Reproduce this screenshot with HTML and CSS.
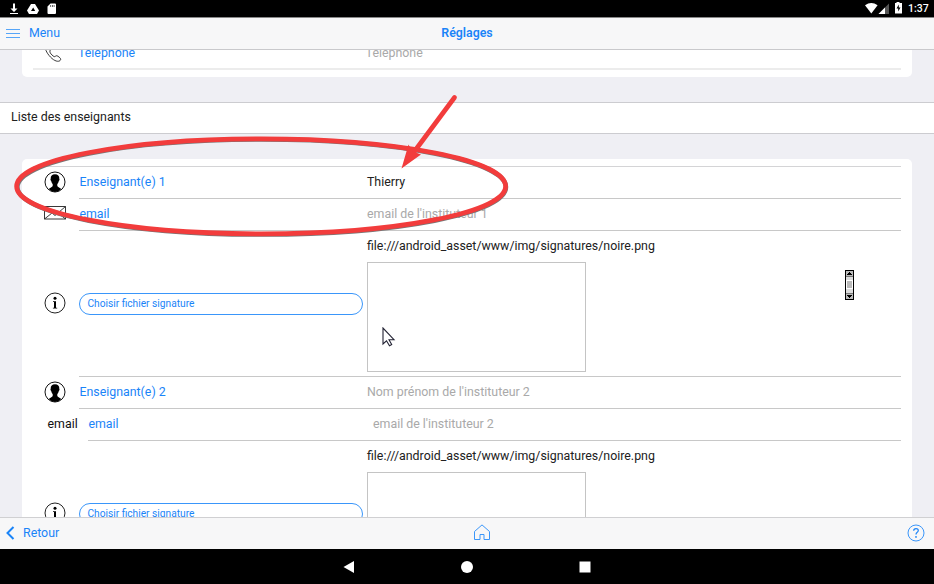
FILE: index.html
```html
<!DOCTYPE html>
<html lang="fr">
<head>
<meta charset="utf-8">
<title>Réglages</title>
<link rel="stylesheet" href="styles.css">
</head>
<body>
<svg class="defs" width="0" height="0">
  <symbol id="person" viewBox="0 0 22 22">
    <circle cx="11" cy="11" r="10" fill="#fff" stroke="#111" stroke-width="1"/>
    <path d="M11 3.200c-2.900 0-4.500 1.700-4.300 4.500-.5.300-.2 1.900.5 2.300.3 1.400.8 2.300 1.500 3v2c-.5 1.200-2.800 1.900-4 2.900A10 10 0 0 0 11 21a10 10 0 0 0 6.300-3.100c-1.200-1-3.500-1.700-4-2.900v-2c.7-.7 1.200-1.600 1.500-3 .7-.4 1-2 .5-2.300.2-2.800-1.400-4.500-4.300-4.500z" fill="#000"/>
  </symbol>
  <symbol id="info" viewBox="0 0 22 22">
    <circle cx="11" cy="11" r="10" fill="none" stroke="#222" stroke-width="1"/>
    <circle cx="11" cy="6.200" r="1.500"/>
    <path d="M9 9.200h3v6.500h1.200v.7H8.900v-.7H10v-5.700H9z"/>
  </symbol>
</svg>
<div class="screen">
  <header class="status">
    <svg class="status-left" width="60" height="17" viewBox="0 0 60 17" fill="#fff">
      <path d="M13 3.500h2v5h2.500L14 12l-3.500-3.500H13zM10 13h8v1h-8z"/>
      <path fill-rule="evenodd" d="M31 4h4l4 6.500-2 3.500h-8l-2-3.500zM33.200 7.500l-2.200 3.500h4.200z"/>
      <path fill-rule="evenodd" d="M50.500 3.500H55q1 0 1 1v8.500q0 1-1 1h-6.500q-1 0-1-1V6.500zM50.300 5.200v1.600h.8V5.200zM52 5.200v1.600h.8V5.200zM53.700 5.200v1.600h.8V5.200z"/>
    </svg>
    <svg class="status-right" width="40" height="17" viewBox="0 0 40 17">
      <path d="M1 5.300Q7.300.8 13.600 5.300L7.300 13.500z" fill="#fff"/>
      <path d="M25 3.500V14H14.500z" fill="#555"/><path d="M21 7.500V14h-6.500z" fill="#fff"/>
      <path d="M32.500 2h3v1H38v10.500h-7V3h1.500z" fill="#fff"/><path d="M34.800 4.500 32.500 8.500h1.700v3l2.300-4h-1.700z" fill="#000"/>
    </svg>
    <span class="clock">1:37</span>
  </header>
  <nav class="topbar">
    <a class="menu"><svg width="14" height="10" viewBox="0 0 14 10"><path d="M0 1.500h14M0 5.500h14M0 9.500h14" stroke="#56a5f8" stroke-width="1"/></svg>Menu</a>
    <h1>Réglages</h1>
  </nav>
  <main class="content">
    <section class="card card-phone">
      <div class="phone-row">
        <div class="icon"><svg width="20" height="22" viewBox="0 0 20 22"><path d="M3 5C1 8 5 14 9 17.500s7.500 3.300 8.500 1.500c.6-1-.2-2-1.500-3s-2.500-1.800-3.500-.8-2 .2-3.500-1.200S6.500 11 7 10s-.5-3-1.500-4.500z" fill="#fff" stroke="#222" stroke-width=".9"/></svg></div>
        <div class="label">Téléphone</div><div class="value hint">Téléphone</div>
      </div>
    </section>
    <h2 class="section-title">Liste des enseignants</h2>
    <section class="card card-list">
      <div class="rows">
      <div class="row">
        <div class="icon"><svg width="22" height="22"><use href="#person"/></svg></div>
        <div class="body"><div class="label">Enseignant(e) 1</div><div class="value">Thierry</div></div>
      </div>
      <div class="row">
        <div class="icon mail"><svg width="22" height="14" viewBox="0 0 22 14"><path d="M.5.500h21v12.500H.5zM.5.500 11 9.500 21.500.500M.5 13l7.500-6M21.500 13 14 7" fill="none" stroke="#222" stroke-width=".9"/></svg></div>
        <div class="body"><div class="label">email</div><div class="value hint">email de l'instituteur 1</div></div>
      </div>
      <div class="row signature">
        <div class="icon"><svg width="22" height="22"><use href="#info"/></svg></div>
        <div class="body"><div class="label"><button>Choisir fichier signature</button></div>
          <div class="value"><div class="path">file:///android_asset/www/img/signatures/noire.png</div><div class="preview"></div></div></div>
      </div>
      <div class="row">
        <div class="icon"><svg width="22" height="22"><use href="#person"/></svg></div>
        <div class="body"><div class="label">Enseignant(e) 2</div><div class="value hint">Nom prénom de l'instituteur 2</div></div>
      </div>
      <div class="row wide-icon">
        <div class="icon">email</div>
        <div class="body"><div class="label">email</div><div class="value hint">email de l'instituteur 2</div></div>
      </div>
      <div class="row signature">
        <div class="icon"><svg width="22" height="22"><use href="#info"/></svg></div>
        <div class="body"><div class="label"><button>Choisir fichier signature</button></div>
          <div class="value"><div class="path">file:///android_asset/www/img/signatures/noire.png</div><div class="preview"></div></div></div>
      </div>
      </div>
    </section>
  </main>
  <footer class="toolbar">
    <a class="back"><svg width="9" height="14" viewBox="0 0 9 14"><path d="M7.500 1 1.500 7l6 6" fill="none" stroke="#1a84f8" stroke-width="2"/></svg>Retour</a>
    <svg class="home" width="18" height="17" viewBox="0 0 18 17"><path d="M1.500 7.500 9 .900l7.500 6.600v8H11v-5H7v5H1.500z" fill="none" stroke="#3a96fa" stroke-width="1"/></svg>
    <svg class="help" width="18" height="18" viewBox="0 0 18 18"><circle cx="9" cy="9" r="8" fill="none" stroke="#3a96fa"/><path d="M6.700 6.800Q6.700 4.600 9 4.600t2.300 2q0 1.100-1.300 1.900-1 .7-1 2.100" fill="none" stroke="#1a84f8" stroke-width="1.200"/><circle cx="9" cy="12.900" r=".9" fill="#1a84f8"/></svg>
  </footer>
  <footer class="android">
    <svg width="12" height="14" viewBox="0 0 12 14"><path d="M.5 7 11 1v12z" fill="#fff"/></svg>
    <svg width="12" height="14" viewBox="0 0 12 14"><circle cx="6" cy="7" r="6" fill="#fff"/></svg>
    <svg width="12" height="14" viewBox="0 0 12 14"><path d="M.5 1.500h11v11H.5z" fill="#fff"/></svg>
  </footer>
  <svg class="annotation" width="934" height="584" viewBox="0 0 934 584">
    <ellipse cx="261.700" cy="187.100" rx="244.300" ry="47.500" fill="none" stroke="#777" stroke-width="4.500"/>
    <ellipse cx="261.100" cy="186.300" rx="244.500" ry="47.500" fill="none" stroke="#f23c3c" stroke-width="4.700"/>
    <path d="M454.500 97.500 411 156" stroke="#f23c3c" stroke-width="4.700" stroke-linecap="round"/>
    <path d="M401.500 168.500 408.500 144.500 412 151 421 154.500z" fill="#f23c3c"/>
  </svg>
  <svg class="scroll-marker" width="9" height="30" viewBox="0 0 9 30" shape-rendering="crispEdges">
    <path d="M0 0h9v30H0z"/><path d="M1 1h7v5H1zM1 24h7v5H1z" fill="#bbb"/><path d="M1 6h7v1H1zM1 23h7v1H1z" fill="#777"/><path d="M1 7h7v16H1z" fill="#ddd"/><path d="M1 10h7v9H1z" fill="#fff"/><path d="M2 11h5v7H2z" fill="#bbb"/>
    <path d="M4 2h1v1h1v1h1v1H2V4h1V3h1zM2 25h5v1H6v1H5v1H4v-1H3v-1H2z"/>
  </svg>
  <svg class="pointer" width="14" height="20" viewBox="0 0 14 20"><path d="M1 1v16l3.500-3.200 3 5 2.200-1.200-2.700-4.900h5z" fill="#fff" stroke="#223" stroke-width="1.100"/></svg>
</div>
</body>
</html>
```

FILE: styles.css
```css
* { box-sizing: border-box; }
body { margin: 0; font-family: Roboto, "Liberation Sans", sans-serif; font-size: 12.38px; color: #212121; }
svg { display: block; }
.defs { position: absolute; }
.screen { position: relative; width: 934px; height: 584px; display: flex; flex-direction: column; overflow: hidden; }
.status { height: 17px; background: #000; display: flex; flex: none; }
.status-right { margin-left: auto; }
.clock { width: 30px; padding-left: 4px; font-size: 10.5px; font-weight: 500; line-height: 18px; color: #fff; }
.topbar { height: 33px; flex: none; padding-bottom: 1px; background: #f7f7f8; border-top: 1px solid #888; border-bottom: 1px solid #c9c9cc; display: grid; grid-template-columns: 1fr auto 1fr; align-items: center; color: #1a84f8; }
.topbar h1 { margin: 0; font-size: 12.36px; font-weight: 600; }
.menu { display: flex; align-items: center; gap: 9px; padding-left: 6px; }
.content { flex: 1; min-height: 0; overflow: hidden; background: #efeff4; }
.card { margin: 0 22px; background: #fff; border-radius: 5px; }
.card-phone { height: 27px; border-radius: 0 0 5px 5px; padding: 0 11px; }
.phone-row { height: 20px; border-bottom: 2px solid #ececec; display: flex; align-items: flex-end; }
.phone-row .icon { width: 45px; padding: 0 0 5px 10px; }
.phone-row .label, .phone-row .value { padding-bottom: 8px; line-height: 14px; }
.section-title { margin: 25px 0; height: 32px; padding-left: 11px; border: solid #ccccd0; border-width: 1px 0; background: #fff; font-size: 12.38px; font-weight: 400; line-height: 29px; }
.card-list { padding: 7px 11px 0; height: 430px; }
.rows { border-top: 1px solid #d4d4d6; }
.row { display: flex; height: 32px; }
.icon { width: 46.4px; flex: none; padding: 0 0 2px 10.5px; display: flex; align-items: center; }
.mail { padding-bottom: 4px; }
.body { flex: 1; display: flex; align-items: center; padding-bottom: 1px; border-bottom: 1px solid #c8c8c8; }
.label { width: 287.6px; flex: none; color: #1a84f8; }
.hint { color: #a9a9a9; }
.wide-icon .icon { width: 55.4px; padding: 0 0 2px 14.5px; color: #111; }
.wide-icon .label { width: 284.6px; }
.signature { height: 146px; }
.signature .value { align-self: flex-start; }
.signature .body { padding-bottom: 0; }
.path { height: 31px; line-height: 31.5px; color: #212121; }
.preview { width: 219px; height: 110px; border: 1px solid #c4c4c4; }
button { display: block; width: 284px; height: 22px; padding: 0 7px 1px; border: 1px solid #3a96fa; border-radius: 11px; background: #fff; color: #1a84f8; font: 10.2px Roboto, sans-serif; text-align: left; }
.toolbar { height: 32px; flex: none; padding-bottom: 2px; border-top: 1px solid #d0d0d2; background: #f7f7f8; color: #1a84f8; display: grid; grid-template-columns: 1fr auto 1fr; align-items: center; }
.back { display: flex; align-items: center; gap: 8px; padding-left: 6px; }
.home { margin: -1px 0 0 30px; }
.help { justify-self: end; margin-right: 9px; }
.android { height: 35px; flex: none; background: #000; display: flex; justify-content: center; align-items: center; gap: 106px; }
.annotation { position: absolute; left: 0; top: 0; }
.scroll-marker { position: absolute; left: 845px; top: 270px; }
.pointer { position: absolute; left: 381.5px; top: 327px; }
```
